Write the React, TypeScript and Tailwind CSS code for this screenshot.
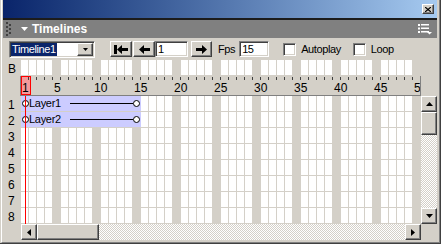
import React from 'react';

const frames = Array.from({ length: 50 }, (_, i) => i + 1);
const rows = [1, 2, 3, 4, 5, 6, 7, 8];

// classic 3d borders
const raised =
  'bg-[#d4d0c8] border border-t-white border-l-white border-r-[#404040] border-b-[#404040] shadow-[inset_-1px_-1px_0_#808080]';
const sunken =
  'bg-white border border-t-[#808080] border-l-[#808080] border-r-white border-b-white shadow-[inset_1px_1px_0_#404040,inset_-1px_-1px_0_#d4d0c8]';
const checker =
  'bg-[repeating-conic-gradient(#d4d0c8_0%_25%,#ffffff_0%_50%)] bg-[length:2px_2px]';

function Cell({ frame }: { frame: number }) {
  if (frame % 5 === 0) {
    return <div className="w-[8px] shrink-0 bg-[#d4d0c8]" />;
  }
  return <div className="w-[8px] shrink-0 bg-white border-r border-[#d4d0c8]" />;
}

function FrameRow() {
  return (
    <div className="flex h-[16px] border-b border-[#d4d0c8]">
      {frames.map((f) => (
        <Cell key={f} frame={f} />
      ))}
    </div>
  );
}

function Key() {
  return <div className="w-[7px] h-[7px] shrink-0 rounded-full border border-black bg-white" />;
}

function LayerRow({ name }: { name: string }) {
  return (
    <div className="flex h-[16px] border-b border-[#d4d0c8]">
      <div className="w-[120px] shrink-0 bg-[#ccccff] flex items-center pl-[1px] pr-[1px]">
        <Key />
        <span className="text-[11px] leading-none tracking-[-0.3px] text-black">{name}</span>
        <div className="flex-1 h-px bg-black ml-[9px]" />
        <Key />
      </div>
      {frames.slice(15).map((f) => (
        <Cell key={f} frame={f} />
      ))}
    </div>
  );
}

function Tri({ dir }: { dir: 'up' | 'down' | 'left' | 'right' }) {
  const pts = {
    up: '3.5,0 7,4 0,4',
    down: '0,0 7,0 3.5,4',
    left: '0,3.5 4,0 4,7',
    right: '0,0 4,3.5 0,7',
  }[dir];
  const w = dir === 'up' || dir === 'down' ? 7 : 4;
  const h = dir === 'up' || dir === 'down' ? 4 : 7;
  return (
    <svg width={w} height={h} viewBox={`0 0 ${w} ${h}`}>
      <polygon points={pts} fill="#000" />
    </svg>
  );
}

export default function App() {
  return (
    <div className="w-[441px] h-[244px] bg-[#d4d0c8] border-r border-b border-[#404040] font-['Liberation_Sans',Arial,sans-serif] text-black overflow-hidden">
      <div className="h-full border-r border-b border-[#808080] border-l border-l-white ml-px pl-[1px] pr-[2px] pb-[2px] flex flex-col">
        {/* title bar */}
        <div className="h-[18px] shrink-0 bg-linear-to-r from-[#0a246a] to-[#a6caf0] flex items-center justify-end pr-[3px]">
          <div className={`${raised} w-[12px] h-[10px] flex items-center justify-center`}>
            <svg width="6" height="5" viewBox="0 0 6 5">
              <path d="M0 0 L6 5 M6 0 L0 5" stroke="#000" strokeWidth="1.2" />
            </svg>
          </div>
        </div>
        <div className="h-[2px] shrink-0 bg-[#1c1c1c]" />

        {/* panel header */}
        <div className="h-[18px] shrink-0 bg-[#808080] flex items-center">
          <svg width="5" height="14" viewBox="0 0 5 14" className="ml-[3px]">
            {[0, 4, 8, 12].map((y) => (
              <rect key={'a' + y} x="0" y={y} width="2" height="2" fill="#404040" />
            ))}
            {[2, 6, 10].map((y) => (
              <rect key={'b' + y} x="3" y={y} width="2" height="2" fill="#404040" />
            ))}
          </svg>
          <svg width="7" height="4" viewBox="0 0 7 4" className="ml-[10px]">
            <polygon points="0,0 7,0 3.5,4" fill="#fff" />
          </svg>
          <span className="ml-[4px] text-white font-bold text-[12px] leading-none">Timelines</span>
          <svg width="14" height="11" viewBox="0 0 14 11" className="ml-auto mr-[5px]">
            {[0, 3.5, 7].map((y) => (
              <g key={y} fill="#fff">
                <rect x="0" y={y} width="2" height="2" />
                <rect x="3" y={y} width="8" height="1.5" />
              </g>
            ))}
            <polygon points="9,8 14,8 11.5,10.5" fill="#fff" />
          </svg>
        </div>

        {/* toolbar */}
        <div className="h-[22px] shrink-0 flex items-center text-[11px] tracking-[-0.4px]">
          <div className={`${sunken} ml-[6px] w-[86px] h-[17px] flex items-center pl-[1px] pr-[1px]`}>
            <span className="bg-[#0a246a] text-white px-[1px] leading-[13px]">Timeline1</span>
            <div className={`${raised} ml-auto w-[16px] h-[13px] flex items-center justify-center`}>
              <svg width="5" height="3" viewBox="0 0 5 3">
                <polygon points="0,0 5,0 2.5,3" fill="#000" />
              </svg>
            </div>
          </div>
          <div className={`${raised} ml-[15px] w-[22px] h-[16px] flex items-center justify-center`}>
            <svg width="14" height="9" viewBox="0 0 14 9">
              <rect x="0" y="0" width="3" height="9" fill="#000" />
              <polygon points="3,4.5 8,0 8,3 14,3 14,6 8,6 8,9" fill="#000" />
            </svg>
          </div>
          <div className={`${raised} ml-[1px] w-[22px] h-[16px] flex items-center justify-center`}>
            <svg width="11" height="9" viewBox="0 0 11 9">
              <polygon points="0,4.5 5,0 5,3 11,3 11,6 5,6 5,9" fill="#000" />
            </svg>
          </div>
          <div className={`${sunken} w-[33px] h-[16px] flex items-center pl-[2px]`}>1</div>
          <div className={`${raised} ml-[3px] w-[21px] h-[16px] flex items-center justify-center`}>
            <svg width="11" height="9" viewBox="0 0 11 9">
              <polygon points="11,4.5 6,0 6,3 0,3 0,6 6,6 6,9" fill="#000" />
            </svg>
          </div>
          <span className="ml-[6px]">Fps</span>
          <div className={`${sunken} ml-[4px] w-[30px] h-[16px] flex items-center pl-[2px]`}>15</div>
          <div className={`${sunken} ml-[14px] w-[13px] h-[13px]`} />
          <span className="ml-[5px]">Autoplay</span>
          <div className={`${sunken} ml-[12px] w-[13px] h-[13px]`} />
          <span className="ml-[5px]">Loop</span>
        </div>

        {/* B row + ruler */}
        <div className="flex shrink-0">
          <div className="w-[18px] shrink-0 flex flex-col">
            <div className="h-[16px] text-[12px] leading-[16px] pt-[1px] pl-[5px]">B</div>
            <div className="h-[20px] border-r border-[#808080]" />
          </div>
          <div className="w-[400px] shrink-0 flex flex-col">
            <FrameRow />
            <div className="relative h-[20px] flex border-b border-r border-[#808080] pt-[1px] overflow-hidden">
              <div className="absolute left-0 top-0 w-[10px] h-[19px] border border-[#ff0000] bg-[#f49a9a]" />
              {frames.map((f) => (
                <div key={f} className="relative w-[8px] shrink-0 flex flex-col">
                  <div className="h-[3px] flex justify-end">
                    <div className="w-px bg-[#404040]" />
                  </div>
                  <div className="text-[12px] leading-[14px] whitespace-nowrap pl-[1px] mt-[1px]">
                    {f === 1 || f % 5 === 0 ? f : ''}
                  </div>
                </div>
              ))}
            </div>
          </div>
        </div>

        {/* layer rows */}
        <div className="flex shrink-0">
          <div className="w-[18px] shrink-0 flex flex-col">
            {rows.map((r) => (
              <div key={r} className="h-[16px] text-[12px] leading-[16px] pt-[1px] pl-[5px]">
                {r}
              </div>
            ))}
          </div>
          <div className="relative w-[400px] shrink-0 flex flex-col">
            <LayerRow name="Layer1" />
            <LayerRow name="Layer2" />
            {rows.slice(2).map((r) => (
              <FrameRow key={r} />
            ))}
            <div className="absolute left-[4px] top-0 bottom-0 w-px bg-[#ff0000]" />
          </div>
          <div className="w-[16px] shrink-0 flex flex-col">
            <div className={`${raised} h-[16px] flex items-center justify-center`}>
              <Tri dir="up" />
            </div>
            <div className={`${raised} h-[23px]`} />
            <div className={`flex-1 ${checker}`} />
            <div className={`${raised} h-[16px] flex items-center justify-center`}>
              <Tri dir="down" />
            </div>
          </div>
        </div>

        {/* horizontal scroll */}
        <div className="flex h-[16px] shrink-0">
          <div className="w-[18px] shrink-0" />
          <div className="w-[400px] shrink-0 flex">
            <div className={`${raised} w-[16px] flex items-center justify-center`}>
              <Tri dir="left" />
            </div>
            <div className={`${raised} w-[62px]`} />
            <div className={`flex-1 ${checker}`} />
            <div className={`${raised} w-[16px] flex items-center justify-center`}>
              <Tri dir="right" />
            </div>
          </div>
        </div>
      </div>
    </div>
  );
}
